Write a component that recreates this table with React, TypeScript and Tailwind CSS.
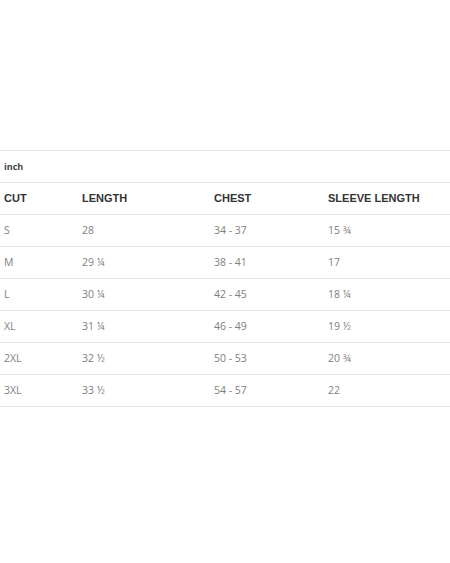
const rows = [
  ['S', '28', '34 - 37', '15 ¾'],
  ['M', '29 ¼', '38 - 41', '17'],
  ['L', '30 ¼', '42 - 45', '18 ¼'],
  ['XL', '31 ¼', '46 - 49', '19 ½'],
  ['2XL', '32 ½', '50 - 53', '20 ¾'],
  ['3XL', '33 ½', '54 - 57', '22'],
]

const cols = 'grid grid-cols-[78px_132px_114px_126px] items-center h-[32px] border-b border-[#e6e6e6]'

export default function App() {
  return (
    <div className="w-[450px] h-[563px] bg-white pt-[150px] font-['Open_Sans',sans-serif]">
      <div className="border-t border-[#e6e6e6]">
        {/* Unit */}
        <div className="h-[32px] flex items-center px-[4px] border-b border-[#e6e6e6] text-[9px] font-bold text-[#444]">
          inch
        </div>

        {/* Header */}
        <div className={cols + ' text-[11px] font-bold text-[#333] font-["Liberation_Sans",sans-serif]'}>
          <div className="pl-[4px]">CUT</div>
          <div className="pl-[4px]">LENGTH</div>
          <div className="pl-[4px]">CHEST</div>
          <div className="pl-[4px]">SLEEVE LENGTH</div>
        </div>

        {/* Body */}
        {rows.map((r) => (
          <div key={r[0]} className={cols + ' text-[10.5px] text-[#808080]'}>
            {r.map((c, i) => (
              <div key={i} className="pl-[4px]">
                {c}
              </div>
            ))}
          </div>
        ))}
      </div>
    </div>
  )
}
